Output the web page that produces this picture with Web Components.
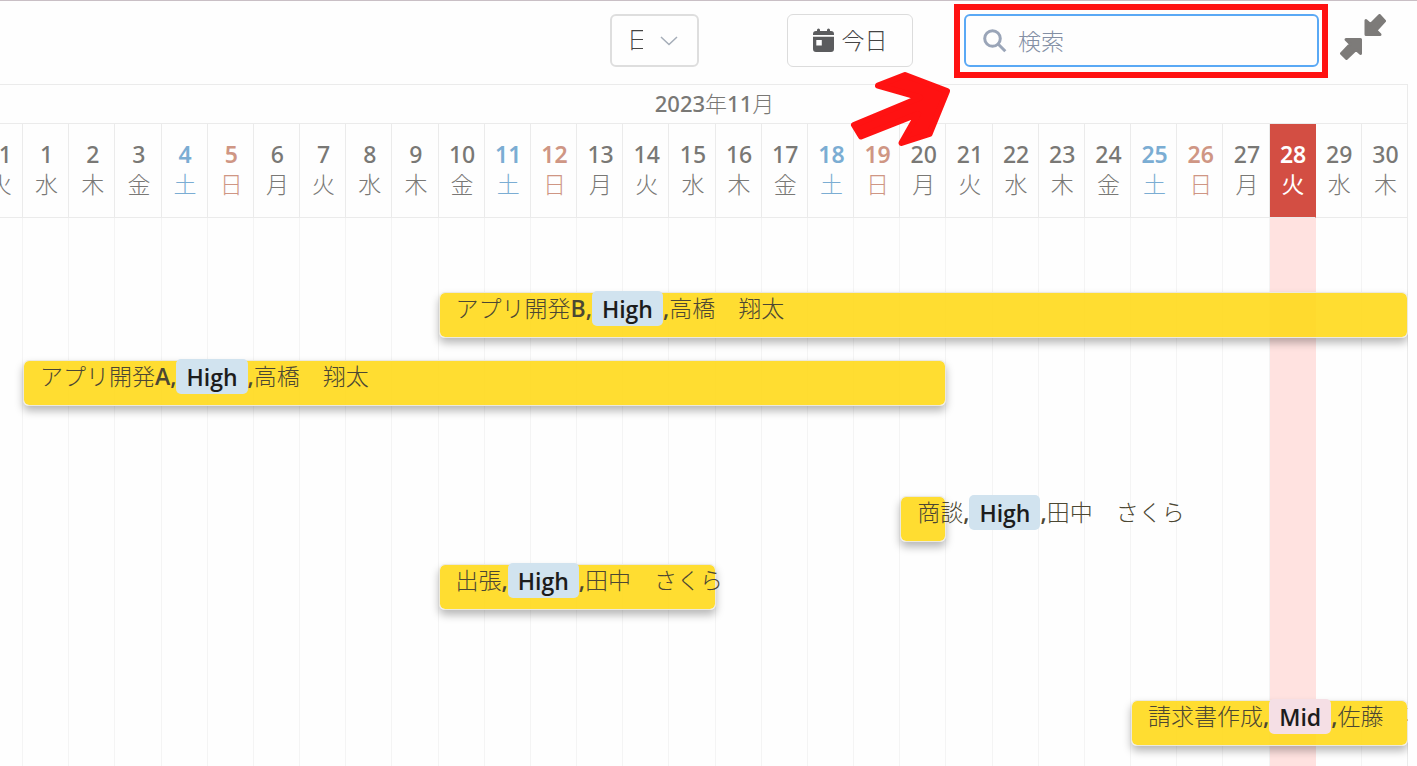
<!DOCTYPE html>
<html lang="ja">
<head>
<meta charset="utf-8">
<title>ガントチャート</title>
<style>
  html, body { margin: 0; min-height: 100vh; }
  body {
    background: #fefefe;
    color: #797875;
    font: 600 23px/30px "Open Sans", "Noto Sans CJK JP", sans-serif;
    display: flex;
  }
  gantt-app { flex: 1; min-width: 0; }
</style>
</head>
<body>
<gantt-app></gantt-app>
<script>
const COLUMNS = "23px repeat(30, minmax(0, 1fr))";

function define(name, html, setup) {
  const template = document.createElement("template");
  template.innerHTML = html.trim();
  customElements.define(name, class extends HTMLElement {
    constructor() {
      super();
      this.attachShadow({ mode: "open" }).append(template.content.cloneNode(true));
    }
    connectedCallback() { if (setup) setup(this, this.shadowRoot); }
  });
}

define("scale-select", `
  <style>
    :host { display: flex; position: relative; width: 89px; height: 53px; }
    select {
      appearance: none; width: 100%; box-sizing: border-box; margin: 0;
      border: 2px solid #dedede; border-radius: 6px; background: #fefefe;
      padding: 0 54px 2px 15px; font: inherit; font-weight: 300; color: #444; outline: 0;
    }
    svg { position: absolute; right: 21px; top: 22px; pointer-events: none; }
  </style>
  <select aria-label="表示単位"><option>日</option><option>週</option><option>月</option></select>
  <svg width="18" height="10" viewBox="0 0 18 10" fill="none" stroke="#a5adb8" stroke-width="1.5"><path d="M1 1l8 7.500 8-7.500"/></svg>
`);

define("today-button", `
  <style>
    :host { display: flex; width: 126px; height: 53px; }
    button {
      width: 100%; display: flex; align-items: center; justify-content: center; gap: 8px;
      border: 1px solid #dcdcdc; border-radius: 6px; background: #fefefe; margin: 0; padding: 0;
      font: inherit; font-weight: 300; color: #444;
    }
  </style>
  <button type="button">
    <svg width="21" height="24" viewBox="0 0 21 24" fill="#5b5c5e">
      <path d="M4 2a1.500 1.500 0 0 1 3 0v1h7V2a1.500 1.500 0 0 1 3 0v1h1a3 3 0 0 1 3 3v1H0V6a3 3 0 0 1 3-3h1z"/>
      <path fill-rule="evenodd" d="M0 8.800h21V21a3 3 0 0 1-3 3H3a3 3 0 0 1-3-3zM3.300 12h5.500v5.500H3.300z"/>
    </svg>
    <span><slot></slot></span>
  </button>
`);

define("search-box", `
  <style>
    :host { display: block; border: 6px solid #ff1212; padding: 4px 3px 5px 4px; box-sizing: border-box; width: 374px; height: 74px; }
    label {
      display: flex; align-items: center; gap: 11px; box-sizing: border-box; height: 53px;
      padding: 0 17px; border: 2px solid #5aa9f5; border-radius: 6px;
    }
    input { flex: 1; min-width: 0; border: 0; outline: 0; padding: 0; background: none; font: inherit; font-weight: 300; color: #555; }
    input::placeholder { color: #838fa4; opacity: 1; }
  </style>
  <label>
    <svg width="24" height="24" viewBox="0 0 24 24" fill="none" stroke="#9aa5b8" stroke-width="3"><circle cx="9.500" cy="9.500" r="7.800"/><path d="M15.300 15.300l7 7"/></svg>
    <input type="text" placeholder="検索" aria-label="検索">
  </label>
`);

define("collapse-button", `
  <style>
    :host { display: block; }
    button { display: block; border: 0; padding: 0; margin: 0; background: none; }
    svg { display: block; }
  </style>
  <button type="button" aria-label="縮小表示">
    <svg width="46" height="46" viewBox="0 0 46 46" fill="#7d7b79" stroke="#7d7b79" stroke-linejoin="round" stroke-width="3">
      <path d="M26 6.500V20.500H40L35.800 16.400 44.500 7 39.500 1.500 30.500 10.500z"/>
      <path d="M20.500 39.500V25.500H6L10.500 30 1.500 39.500 6.500 44.500 16 35.500z"/>
    </svg>
  </button>
`);

define("gantt-toolbar", `
  <style>
    :host {
      display: flex; align-items: center; justify-content: flex-end; box-sizing: border-box;
      height: 84px; padding: 0 31px 3px 16px; border-top: 1px solid #c9bfc5; position: relative;
    }
    scale-select { margin: 0 88px 2px 0; }
    today-button { margin: 0 41px 2px 0; }
    search-box { margin-right: 12px; }
    collapse-button { margin-bottom: 8px; }
    .pointer { position: absolute; right: 465px; top: 69px; z-index: 5; }
  </style>
  <scale-select></scale-select>
  <today-button>今日</today-button>
  <search-box></search-box>
  <collapse-button></collapse-button>
  <svg class="pointer" width="103" height="78" viewBox="0 0 103 78" fill="#ff1212" stroke="#ff1212" stroke-width="6" stroke-linejoin="round">
    <path d="M5 55L71 27.500 29 15.500 56 5 98 21 80.500 64 52.500 73 69 44 12 66.500z"/>
  </svg>
`);

define("gantt-day", `
  <style>
    :host {
      display: flex; flex-direction: column; align-items: center; box-sizing: border-box;
      min-width: 0; height: 94px; padding: 15px 0 0 2px; overflow: hidden;
      font-family: "Noto Sans", "Noto Sans CJK JP", sans-serif; font-weight: 500;
      border-right: 1px solid #ebebeb; border-bottom: 1px solid #ebebeb;
    }
    :host([kind="sat"]) { color: #7badd3; font-weight: 600; }
    :host([kind="sun"]) { color: #cf9684; font-weight: 600; }
    :host([kind="today"]) {
      color: #fff; font-weight: 600; background: #d34e43; background-clip: padding-box; border-right-color: #d34e43;
    }
    :host([kind="cut"]) { align-items: flex-end; padding-right: 10px; }
    .week { font-weight: 300; }
    :host([kind="today"]) .week { font-weight: 400; }
  </style>
  <span class="num"></span><span class="week"></span>
`, (host, root) => {
  root.querySelector(".num").textContent = host.getAttribute("num");
  root.querySelector(".week").textContent = host.getAttribute("week");
});

define("gantt-header", `
  <style>
    :host { display: block; }
    .month {
      height: 40px; box-sizing: border-box; border: 1px solid #ebebeb; border-left: 0;
      text-align: center; line-height: 36px; padding-left: 22px; font-size: 22px; font-weight: 500;
      font-family: "Noto Sans", "Noto Sans CJK JP", sans-serif;
    }
    .month span { font-weight: 300; }
    .days { display: grid; grid-template-columns: ${COLUMNS}; }
  </style>
  <div class="month">2023<span>年</span>11<span>月</span></div>
  <div class="days"></div>
`, (host, root) => {
  const days = root.querySelector(".days");
  const add = (num, week, kind) => {
    const day = document.createElement("gantt-day");
    day.setAttribute("num", num);
    day.setAttribute("week", week);
    day.setAttribute("kind", kind);
    days.append(day);
  };
  add("31", "火", "cut");
  for (let d = 1; d <= 30; d++) {
    const week = "火水木金土日月"[d % 7];
    add(d, week, d === 28 ? "today" : week === "土" ? "sat" : week === "日" ? "sun" : "work");
  }
});

define("priority-tag", `
  <style>
    :host {
      display: inline-block; box-sizing: border-box; height: 35px; padding: 0 10px; line-height: 37px;
      border-radius: 5px; background: #d1e3ef; color: #1c1c1c; font-weight: 600; vertical-align: top;
      white-space: normal;
    }
    :host([level="mid"]) { background: #f5dfe5; }
  </style>
  <slot></slot>
`);

define("gantt-bar", `
  <style>
    :host { display: block; min-width: 0; position: relative; }
    .fill {
      height: 46px; box-sizing: border-box; border: 1px solid #ece9dd; border-radius: 6px;
      background: rgba(255, 217, 27, .9); background-clip: padding-box; box-shadow: 0 5px 9px rgba(0, 0, 0, .28);
    }
    .label {
      position: absolute; left: 17px; top: -1px; white-space: nowrap;
      line-height: 35px; font-weight: 300; color: #4c4733;
    }
  </style>
  <div class="fill"></div>
  <div class="label"><slot></slot></div>
`);

define("gantt-body", `
  <style>
    :host {
      display: grid; grid-template-columns: ${COLUMNS}; grid-template-rows: 75px; grid-auto-rows: 68px;
      position: relative; overflow: hidden; flex: 1; margin-top: -1px;
    }
    .lines { position: absolute; inset: 1px 0 0; display: grid; grid-template-columns: ${COLUMNS}; }
    .lines i { border-right: 1px solid #f4f4f4; }
    .lines i:last-child { border-color: #ebebeb; }
    .lines i.today { background: #ffe2e0; border-color: #ffe2e0; }
    b { font-weight: 600; }
  </style>
  <div class="lines"></div>
  <gantt-bar style="grid-area: 2 / 11 / 3 / 32">アプリ開発<b>B,</b><priority-tag>High</priority-tag><b>,</b>高橋　翔太</gantt-bar>
  <gantt-bar style="grid-area: 3 / 2 / 4 / 22">アプリ開発<b>A,</b><priority-tag>High</priority-tag><b>,</b>高橋　翔太</gantt-bar>
  <gantt-bar style="grid-area: 5 / 21 / 6 / 22">商談<b>,</b><priority-tag>High</priority-tag><b>,</b>田中　さくら</gantt-bar>
  <gantt-bar style="grid-area: 6 / 11 / 7 / 17">出張<b>,</b><priority-tag>High</priority-tag><b>,</b>田中　さくら</gantt-bar>
  <gantt-bar style="grid-area: 8 / 26 / 9 / 32">請求書作成<b>,</b><priority-tag level="mid">Mid</priority-tag><b>,</b>佐藤　花子</gantt-bar>
`, (host, root) => {
  const lines = root.querySelector(".lines");
  for (let d = 0; d <= 30; d++) {
    const line = document.createElement("i");
    if (d === 28) line.className = "today";
    lines.append(line);
  }
});

define("gantt-app", `
  <style>
    :host { display: flex; flex-direction: column; height: 100vh; overflow: hidden; }
    main { flex: 1; display: flex; flex-direction: column; margin-right: 9px; min-height: 0; }
  </style>
  <gantt-toolbar></gantt-toolbar>
  <main><gantt-header></gantt-header><gantt-body></gantt-body></main>
`);
</script>
</body>
</html>
